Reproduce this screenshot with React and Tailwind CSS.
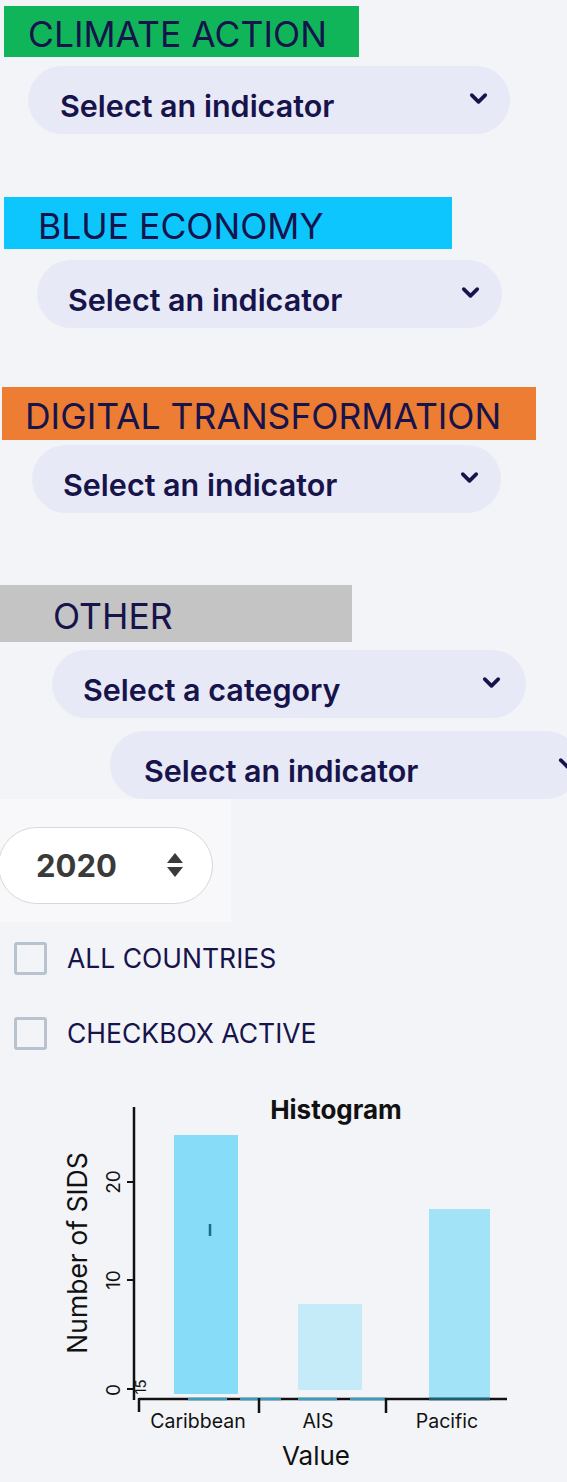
import React from 'react';
import { ChevronDown } from 'lucide-react';

const font = { fontFamily: 'Inter, "Noto Sans", sans-serif' };

const Header = ({ label, className }) => (
  <div className={`flex items-center pt-[7px] text-[35.5px] font-normal leading-none text-[#17134b] ${className}`}>
    {label}
  </div>
);

const Dropdown = ({ label, className, chevronClass = 'mr-[18px]' }) => (
  <div className={`flex h-[68px] items-center justify-between rounded-full bg-[#e8e9f6] ${className}`}>
    <span className="pt-3 text-[30.5px] font-semibold leading-none text-[#17134b]">{label}</span>
    <ChevronDown size={27} strokeWidth={3.2} className={`mb-1 text-[#17134b] ${chevronClass}`} />
  </div>
);

const Checkbox = ({ label, className }) => (
  <label className={`flex items-center ${className}`}>
    <span className="ml-[14px] h-[33px] w-[33px] rounded-[3px] border-[3px] border-[#b9c2cf]" />
    <span className="ml-[20px] text-[26.5px] leading-none text-[#17134b]">{label}</span>
  </label>
);

const Histogram = () => (
  <svg width="567" height="392" viewBox="0 1090 567 392" className="block" style={font}>
    <text x="336" y="1117" textAnchor="middle" fontSize="26" fontWeight="700" fill="#111">Histogram</text>

    {/* bars */}
    <rect x="174" y="1133" width="64" height="259" fill="#87dcf8" />
    <rect x="298" y="1302" width="64" height="86" fill="#c5eaf8" />
    <rect x="429" y="1207" width="61" height="190" fill="#a2e3f8" />
    <line x1="210" y1="1222" x2="210" y2="1234" stroke="#1e6b86" strokeWidth="2.5" />

    {/* y axis */}
    <line x1="134" y1="1105" x2="134" y2="1398" stroke="#111" strokeWidth="2.5" />
    <line x1="127" y1="1180" x2="134" y2="1180" stroke="#111" strokeWidth="2" />
    <line x1="127" y1="1278" x2="134" y2="1278" stroke="#111" strokeWidth="2" />
    <line x1="127" y1="1387" x2="134" y2="1387" stroke="#111" strokeWidth="2" />
    <text transform="translate(120 1180) rotate(-90)" textAnchor="middle" fontSize="19" fill="#111">20</text>
    <text transform="translate(120 1278) rotate(-90)" textAnchor="middle" fontSize="19" fill="#111">10</text>
    <text transform="translate(120 1388) rotate(-90)" textAnchor="middle" fontSize="19" fill="#111">0</text>
    <text transform="translate(146 1385) rotate(-90)" textAnchor="middle" fontSize="15" fill="#111">15</text>
    <text transform="translate(87 1251) rotate(-90)" textAnchor="middle" fontSize="26.5" fill="#111">Number of SIDS</text>

    {/* x axis */}
    <line x1="139" y1="1397" x2="507" y2="1397" stroke="#111" strokeWidth="2.5" />
    <line x1="188" y1="1397" x2="227" y2="1397" stroke="#3a9cbf" strokeWidth="2.5" />
    <line x1="240" y1="1397" x2="281" y2="1397" stroke="#3a9cbf" strokeWidth="2.5" />
    <line x1="298" y1="1397" x2="337" y2="1397" stroke="#3a9cbf" strokeWidth="2.5" />
    <line x1="350" y1="1397" x2="387" y2="1397" stroke="#3a9cbf" strokeWidth="2.5" />
    <line x1="429" y1="1397" x2="490" y2="1397" stroke="#1d5f74" strokeWidth="2.5" />
    <line x1="139" y1="1396" x2="139" y2="1410" stroke="#111" strokeWidth="2.5" />
    <line x1="259" y1="1396" x2="259" y2="1411" stroke="#111" strokeWidth="2.5" />
    <line x1="386" y1="1396" x2="386" y2="1411" stroke="#111" strokeWidth="2.5" />
    <text x="198" y="1426" textAnchor="middle" fontSize="19.5" fill="#111">Caribbean</text>
    <text x="318" y="1426" textAnchor="middle" fontSize="19.5" fill="#111">AIS</text>
    <text x="447" y="1426" textAnchor="middle" fontSize="19.5" fill="#111">Pacific</text>
    <text x="316" y="1463" textAnchor="middle" fontSize="26" fill="#111">Value</text>
  </svg>
);

export default function App() {
  return (
    <div className="h-[1482px] w-[567px] overflow-hidden bg-[#f3f4f8] pt-[6px]" style={font}>
      <Header label="CLIMATE ACTION" className="ml-[4px] h-[51px] w-[355px] bg-[#10b55a] pl-[24px]" />
      <Dropdown label="Select an indicator" className="ml-[28px] mt-[9px] w-[482px] pl-[32px]" />

      <Header label="BLUE ECONOMY" className="ml-[4px] mt-[63px] h-[52px] w-[448px] bg-[#0cc6fd] pl-[34px]" />
      <Dropdown label="Select an indicator" className="ml-[37px] mt-[11px] w-[465px] pl-[31px]" />

      <Header label="DIGITAL TRANSFORMATION" className="ml-[2px] mt-[59px] h-[53px] w-[534px] bg-[#ed7d32] pl-[23px]" />
      <Dropdown label="Select an indicator" className="ml-[32px] mt-[5px] w-[469px] pl-[31px]" />

      <Header label="OTHER" className="mt-[72px] h-[57px] w-[352px] bg-[#c4c4c4] pl-[53px]" />
      <Dropdown label="Select a category" className="ml-[52px] mt-[8px] w-[474px] pl-[31px]" chevronClass="mr-[21px]" />
      <Dropdown label="Select an indicator" className="ml-[110px] mt-[13px] w-[470px] pl-[34px]" chevronClass="mr-[-1px]" />

      <div className="flex h-[123px] w-[231px] items-center bg-[#f8f8fa]">
        <div className="ml-[-2px] mt-[9px] flex h-[77px] w-[215px] items-center justify-between rounded-full border-[1.5px] border-[#d8d8d8] bg-white pl-[37px] pr-[28px]">
          <span className="text-[31px] font-bold leading-none text-[#3a3a3a]">2020</span>
          <svg width="18" height="24" viewBox="0 0 18 24">
            <path d="M9 0 L17 10 L1 10 Z" fill="#3a3a3a" />
            <path d="M1 14 L17 14 L9 24 Z" fill="#3a3a3a" />
          </svg>
        </div>
      </div>

      <Checkbox label="ALL COUNTRIES" className="mt-[20px]" />
      <Checkbox label="CHECKBOX ACTIVE" className="mt-[42px]" />

      <div className="mt-[42px]">
        <Histogram />
      </div>
    </div>
  );
}
